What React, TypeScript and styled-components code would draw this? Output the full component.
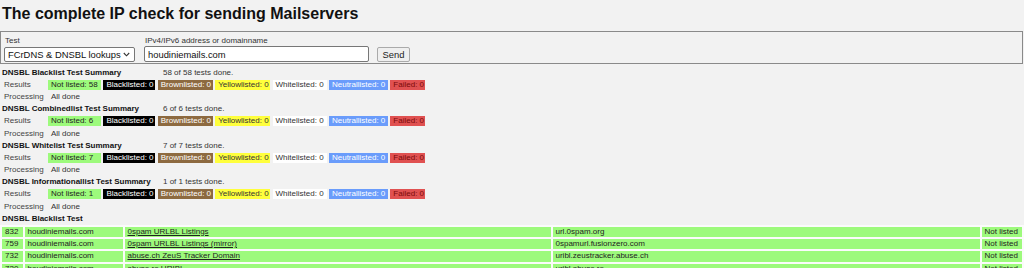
import React from 'react';
import styled, { createGlobalStyle } from 'styled-components';

const GlobalStyle = createGlobalStyle`
  body {
    margin: 0;
    background: #f2f2f2;
    color: #222;
    font-family: "Liberation Sans", Arial, sans-serif;
  }
`;

type Tone = 'ok' | 'black' | 'brown' | 'yellow' | 'white' | 'neutral' | 'failed';

const tones: Record<Tone, { bg: string; fg: string }> = {
  ok: { bg: '#9dfa7c', fg: '#222' },
  black: { bg: '#000', fg: '#fff' },
  brown: { bg: '#8d6a40', fg: '#fff' },
  yellow: { bg: '#ffff3c', fg: '#333' },
  white: { bg: '#fff', fg: '#333' },
  neutral: { bg: '#6a9cfb', fg: '#fff' },
  failed: { bg: '#e05151', fg: '#7a0b0b' },
};

// Page
const Page = styled.div`
  width: 1024px;
`;

const Title = styled.h1`
  margin: 0;
  padding: 4px 0 0 2px;
  font-size: 16px;
  line-height: 19px;
  font-weight: bold;
  color: #111;
`;

// Form
const Form = styled.form`
  margin: 8px 1px 0 0;
  border: 1px solid #8a8a8a;
  padding: 4px 3px 1px;
  display: flex;
  align-items: flex-end;
  gap: 9px;
`;

const Field = styled.div`
  display: flex;
  flex-direction: column;
`;

const Label = styled.label`
  font-size: 8px;
  line-height: 10px;
  padding-left: 1px;
  color: #333;
`;

const Controls = styled.div`
  display: flex;
  align-items: center;
  gap: 8px;
  height: 16px;
`;

const SelectWrap = styled.div`
  position: relative;
  display: flex;
`;

const Select = styled.select`
  appearance: none;
  width: 131px;
  height: 15px;
  padding: 0 0 0 3px;
  font-family: "Liberation Sans", Arial, sans-serif;
  font-size: 9.4px;
  color: #111;
  background: #fff;
  border: 1px solid #777;
  border-radius: 2px;
`;

const Chevron = styled.svg`
  position: absolute;
  right: 5px;
  top: 5px;
  width: 7px;
  height: 5px;
  pointer-events: none;
`;

const Input = styled.input`
  width: 225px;
  height: 16px;
  box-sizing: border-box;
  padding: 0 3px;
  font-family: "Liberation Sans", Arial, sans-serif;
  font-size: 9.4px;
  color: #111;
  background: #fff;
  border: 1px solid #777;
  border-radius: 2px;
`;

const Button = styled.button`
  width: 33px;
  height: 15px;
  padding: 0;
  font-family: "Liberation Sans", Arial, sans-serif;
  font-size: 9.4px;
  color: #222;
  background: #efefef;
  border: 1px solid #aaa;
  border-radius: 2px;
`;

// Summaries
const Summaries = styled.div`
  margin-top: 2.7px;
`;

const Row = styled.div`
  display: flex;
  align-items: center;
  height: 12.18px;
  font-size: 8px;
  line-height: 12px;
`;

const Heading = styled.div`
  width: 158px;
  padding-left: 2px;
  font-weight: bold;
  color: #111;
`;

const RowLabel = styled.div`
  width: 44px;
  padding-left: 4px;
  color: #444;
`;

const Value = styled.div`
  padding-left: 3px;
  color: #333;
`;

const Badges = styled.div`
  display: grid;
  grid-template-columns: 53px 52px 55px 55px 54px 59px 35px;
  column-gap: 2.4px;
`;

const Badge = styled.span<{ $tone: Tone }>`
  height: 10px;
  line-height: 10px;
  padding-left: 3px;
  white-space: nowrap;
  background: ${(p) => tones[p.$tone].bg};
  color: ${(p) => tones[p.$tone].fg};
`;

// Results table
const Table = styled.table`
  width: 1024px;
  table-layout: fixed;
  border-collapse: separate;
  border-spacing: 2px;
  margin-top: -0.3px;
  background: #fbfbfb;
  font-size: 8px;
`;

const Cell = styled.td`
  height: 10.3px;
  padding: 0 0 0 3px;
  line-height: 10px;
  background: #9dfa7c;
  color: #222;
  white-space: nowrap;
  overflow: hidden;
`;

const Link = styled.a`
  color: #222;
  text-decoration: underline;
`;

const summaries = [
  { name: 'DNSBL Blacklist Test Summary', done: '58 of 58 tests done.', ok: 58 },
  { name: 'DNSBL Combinedlist Test Summary', done: '6 of 6 tests done.', ok: 6 },
  { name: 'DNSBL Whitelist Test Summary', done: '7 of 7 tests done.', ok: 7 },
  { name: 'DNSBL Informationallist Test Summary', done: '1 of 1 tests done.', ok: 1 },
];

const rows = [
  { id: 832, list: '0spam URLBL Listings', zone: 'url.0spam.org' },
  { id: 759, list: '0spam URLBL Listings (mirror)', zone: '0spamurl.fusionzero.com' },
  { id: 732, list: 'abuse.ch ZeuS Tracker Domain', zone: 'uribl.zeustracker.abuse.ch' },
  { id: 720, list: 'abuse.ro URIBL', zone: 'uribl.abuse.ro' },
];

const App: React.FC = () => {
  return (
    <Page>
      <GlobalStyle />
      <Title>The complete IP check for sending Mailservers</Title>
      <Form onSubmit={(e) => e.preventDefault()}>
        <Field>
          <Label>Test</Label>
          <Controls>
            <SelectWrap>
              <Select defaultValue="fcrdns">
                <option value="fcrdns">FCrDNS &amp; DNSBL lookups</option>
              </Select>
              <Chevron viewBox="0 0 7 5">
                <path d="M0.8 1 L3.5 3.8 L6.2 1" fill="none" stroke="#333" strokeWidth="1.1" />
              </Chevron>
            </SelectWrap>
          </Controls>
        </Field>
        <Field>
          <Label>IPv4/IPv6 address or domainname</Label>
          <Controls>
            <Input defaultValue="houdiniemails.com" />
            <Button type="submit">Send</Button>
          </Controls>
        </Field>
      </Form>

      <Summaries>
        {summaries.map((s) => (
          <div key={s.name}>
            <Row>
              <Heading>{s.name}</Heading>
              <Value>{s.done}</Value>
            </Row>
            <Row>
              <RowLabel>Results</RowLabel>
              <Badges>
                <Badge $tone="ok">Not listed: {s.ok}</Badge>
                <Badge $tone="black">Blacklisted: 0</Badge>
                <Badge $tone="brown">Brownlisted: 0</Badge>
                <Badge $tone="yellow">Yellowlisted: 0</Badge>
                <Badge $tone="white">Whitelisted: 0</Badge>
                <Badge $tone="neutral">Neutrallisted: 0</Badge>
                <Badge $tone="failed">Failed: 0</Badge>
              </Badges>
            </Row>
            <Row>
              <RowLabel>Processing</RowLabel>
              <Value>All done</Value>
            </Row>
          </div>
        ))}
        <Row>
          <Heading>DNSBL Blacklist Test</Heading>
        </Row>
      </Summaries>

      <Table>
        <colgroup>
          <col style={{ width: 20.5 }} />
          <col style={{ width: 98 }} />
          <col style={{ width: 426 }} />
          <col style={{ width: 427 }} />
          <col style={{ width: 40.5 }} />
        </colgroup>
        <tbody>
          {rows.map((r) => (
            <tr key={r.id}>
              <Cell>{r.id}</Cell>
              <Cell>houdiniemails.com</Cell>
              <Cell>
                <Link href="#">{r.list}</Link>
              </Cell>
              <Cell>{r.zone}</Cell>
              <Cell>Not listed</Cell>
            </tr>
          ))}
        </tbody>
      </Table>
    </Page>
  );
};

export default App;
